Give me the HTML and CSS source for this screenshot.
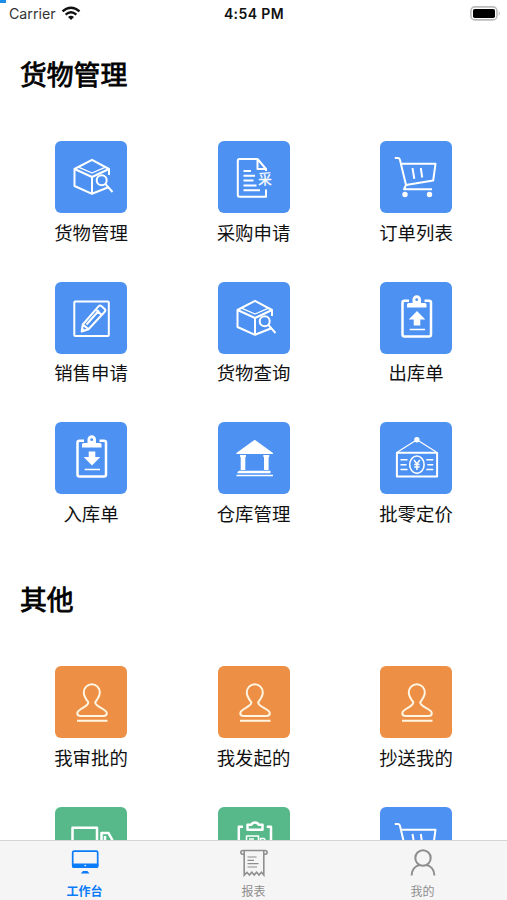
FILE: index.html
```
<!DOCTYPE html>
<html lang="zh-CN">
<head>
  <meta charset="UTF-8">
  <meta name="viewport" content="width=device-width, initial-scale=1.0">
  <title>工作台</title>
  <link rel="stylesheet" href="styles.css">
</head>
<body>
  <svg class="symbols">
    <symbol id="box" viewBox="0 0 72 72">
      <path d="M54 34V28L37 18.8L19.5 28V45L37 52.8L54 46M19.5 28L37 36L54 28M37 36V53"/>
      <path d="M24 26.3L37 32L50 26.3" stroke-width="1.3"/>
      <circle cx="46.7" cy="39.3" r="5" fill="#4d92f2"/>
      <path d="M50.5 43.2L57.5 51"/>
    </symbol>
    <symbol id="cart" viewBox="0 0 72 72">
      <path d="M14.8 17H18Q19.6 17.2 20 19L26 44M22 22.8H55.5L53.2 39.5L26 44L24 48.2H52M32.5 27L34.3 37.8M40.8 27L42.2 36.5"/>
      <circle class="solid" cx="25" cy="53.5" r="2.7"/>
      <circle class="solid" cx="49.5" cy="53.5" r="2.7"/>
    </symbol>
    <symbol id="clipboard" viewBox="0 0 72 72">
      <path stroke-width="2.5" d="M29 18.7H24.5Q22.5 18.7 22.5 20.7V52.5Q22.5 54.5 24.5 54.5H49Q51 54.5 51 52.5V20.7Q51 18.7 49 18.7H44.5"/>
      <path class="solid" d="M27 25.5V22.5Q27 21 28.5 21H32.5V17.5A4.2 4.2 0 0 1 41 17.5V21H45Q46.5 21 46.5 22.5V25.5Z"/>
      <circle cx="36.7" cy="17.7" r="1.4" fill="#4d92f2" stroke="none"/>
      <path stroke-width="1.5" d="M29.7 47.5H45"/>
    </symbol>
    <symbol id="stamp" viewBox="0 0 72 72">
      <path d="M33.3 36.2C31.2 33.4 28.8 30.5 28.8 26.5A8 8.3 0 0 1 44.8 26.5C44.8 30.5 42.2 33.4 40.2 36.2C39.6 41 51.8 42.4 51.8 47.2Q51.8 50 48.5 50H25.5Q22.3 50 22.3 47.2C22.3 42.4 34 41 33.3 36.2ZM22 54.8H52.5"/>
    </symbol>
  </svg>

  <div class="screen">
    <header class="status-bar">
      <div class="carrier">
        <span>Carrier</span>
        <svg width="20" height="15" viewBox="0 0 20 15">
          <path d="M1.5 5.4Q10-2 18.5 5.4M4.6 8.6Q10 3.9 15.4 8.6" fill="none" stroke="#111" stroke-width="2.3"/>
          <path d="M7 11Q10 8.5 13 11L10 14Z" fill="#111"/>
        </svg>
      </div>
      <div class="time">4:54 PM</div>
      <svg class="battery" width="31" height="15" viewBox="0 0 31 15">
        <rect x=".9" y=".9" width="26" height="13" rx="4" fill="#fff" stroke="#bbb" stroke-width="1.6"/>
        <rect x="3" y="3" width="22" height="9" rx="1.8"/>
        <path d="M28.7 5Q31 7.4 28.7 10Z" fill="#bbb"/>
      </svg>
      <i class="corner"></i>
    </header>

    <main>
      <section>
        <h2>货物管理</h2>
        <div class="grid">
          <div class="item">
            <svg class="tile"><use href="#box"/></svg>
            <span>货物管理</span>
          </div>
          <div class="item">
            <svg class="tile" viewBox="0 0 72 72">
              <path d="M48 30V28L39.5 18H21.5Q19.8 18 19.8 19.7V54Q19.8 55.7 21.5 55.7H48V48.5M39.5 18V28H48M25.5 30H33M25.5 34.7H37M25.5 39.5H35.5M25.5 44.4H38.5M25.5 49.3H42"/>
              <text x="40.3" y="43">采</text>
            </svg>
            <span>采购申请</span>
          </div>
          <div class="item">
            <svg class="tile"><use href="#cart"/></svg>
            <span>订单列表</span>
          </div>
          <div class="item">
            <svg class="tile" viewBox="0 0 72 72">
              <rect x="19.3" y="19.5" width="34.5" height="34.5" rx="1"/>
              <path d="M26.7 49.5L27.8 42.5L43.5 24.3Q44.8 22.8 46.3 24L49.7 27Q51 28.3 49.7 29.8L33.5 47.3ZM27.8 42.5L33.5 47.3M41 27.5L46.5 33M31.5 42.5L44 28.5"/>
              <path class="solid" d="M26.2 50L27 45.5L30.5 48.6Z"/>
            </svg>
            <span>销售申请</span>
          </div>
          <div class="item">
            <svg class="tile"><use href="#box"/></svg>
            <span>货物查询</span>
          </div>
          <div class="item">
            <svg class="tile" viewBox="0 0 72 72">
              <use href="#clipboard"/>
              <path class="solid" d="M37 29L45.3 37.5H40.3V43.5H33.7V37.5H28.7Z"/>
            </svg>
            <span>出库单</span>
          </div>
          <div class="item">
            <svg class="tile" viewBox="0 0 72 72">
              <use href="#clipboard"/>
              <path class="solid" d="M37 43.5L45.3 35H40.3V29.5H33.7V35H28.7Z"/>
            </svg>
            <span>入库单</span>
          </div>
          <div class="item">
            <svg class="tile" viewBox="0 0 72 72">
              <path class="solid" d="M36.7 17.8L55 31V32H18.4V31ZM22 33H28V34.5L27.3 35.5V48H22.7V35.5L22 34.5ZM45.3 33H51.3V34.5L50.6 35.5V48H46V35.5L45.3 34.5ZM21 48.8H52.5V51.3H19.5V50ZM18.5 52.7H55V54.3H18.5Z"/>
            </svg>
            <span>仓库管理</span>
          </div>
          <div class="item">
            <svg class="tile" viewBox="0 0 72 72">
              <circle class="solid" cx="36.9" cy="17.8" r="2.7"/>
              <path stroke-width="1.2" d="M17.5 30L36.9 17.8L56.3 30"/>
              <rect x="16.9" y="30.8" width="40.2" height="23.7"/>
              <ellipse cx="36.9" cy="42.7" rx="7.2" ry="8.7" stroke-width="1.6"/>
              <path stroke-width="1.5" d="M34 38L36.9 42L39.8 38M36.9 42V48M34.2 42.6H39.6M34.2 45H39.6M20.5 37.7H27.5M20.5 42.7H26.5M20.5 47.5H27.5M46.3 37.7H53.3M47.3 42.7H53.3M46.3 47.5H53.3"/>
            </svg>
            <span>批零定价</span>
          </div>
        </div>
      </section>

      <section>
        <h2>其他</h2>
        <div class="grid">
          <div class="item">
            <svg class="tile orange"><use href="#stamp"/></svg>
            <span>我审批的</span>
          </div>
          <div class="item">
            <svg class="tile orange"><use href="#stamp"/></svg>
            <span>我发起的</span>
          </div>
          <div class="item">
            <svg class="tile orange"><use href="#stamp"/></svg>
            <span>抄送我的</span>
          </div>
          <div class="item">
            <svg class="tile green" viewBox="0 0 72 72">
              <path stroke-width="2.5" d="M17.5 48V20.8H42V48ZM46.5 48V26H53.5L59 36V48ZM50 29V36H58"/>
            </svg>
          </div>
          <div class="item">
            <svg class="tile green" viewBox="0 0 72 72">
              <path stroke-width="2.5" d="M25 19.7H20.8V55H53V19.7H48.8M29.5 22.8V17.8H33.3A4 3.6 0 0 1 40.7 17.8H44.5V22.8Z"/>
              <path stroke-width="1.5" d="M28.5 42V29H40.5V42M42.5 42V31.5H46L48.5 35V42M31 32H36"/>
            </svg>
          </div>
          <div class="item">
            <svg class="tile"><use href="#cart"/></svg>
          </div>
        </div>
      </section>
    </main>

    <nav class="tab-bar">
      <div class="tab active">
        <svg width="28" height="28" viewBox="0 0 28 28">
          <rect x="1.7" y="2.2" width="25" height="16" rx="1.5" fill="none" stroke="currentColor" stroke-width="1.7"/>
          <path d="M1 14.5H27.4V17.3Q27.4 19 25.7 19H2.7Q1 19 1 17.3ZM12 22H16.4L18.5 24.6H9.8Z" fill="currentColor"/>
          <circle cx="14.2" cy="16.6" r=".8" fill="#fff"/>
        </svg>
        <span>工作台</span>
      </div>
      <div class="tab">
        <svg width="28" height="28" viewBox="0 0 28 28" fill="none" stroke="currentColor" stroke-width="1.6">
          <path d="M4 5.2H2.7A1.8 1.8 0 0 1 2.7 1.5H25.3A1.8 1.8 0 0 1 25.3 5.2H24M4.2 2V26L7 23.3L9.4 26L11.8 23.3L14.2 26L16.6 23.3L19 26L21.4 23.3L23.8 26V2"/>
          <path stroke-width="1.2" d="M7.5 8H16.5M7.5 11.3H14M7.5 14.7H18.5M7.5 18H17"/>
        </svg>
        <span>报表</span>
      </div>
      <div class="tab">
        <svg width="28" height="28" viewBox="0 0 28 28" fill="none" stroke="currentColor" stroke-width="2">
          <circle cx="14" cy="9" r="7.7"/>
          <path d="M2.6 26.5C2.6 20.5 6.5 17 10.3 16M25.4 26.5C25.4 20.5 21.5 17 17.7 16"/>
        </svg>
        <span>我的</span>
      </div>
    </nav>
  </div>
</body>
</html>
```
FILE: styles.css
```
* {
  box-sizing: border-box;
}
body {
  margin: 0;
  background: #fff;
  color: #111;
  font-family: "Liberation Sans", "Noto Sans CJK SC", sans-serif;
}
.symbols {
  display: none;
}
.screen {
  display: flex;
  flex-direction: column;
  height: 900px;
  overflow: hidden;
}
.status-bar {
  position: relative;
  flex: none;
  display: grid;
  grid-template-columns: 1fr auto 1fr;
  align-items: center;
  height: 27px;
  padding: 0 6px 0 9px;
  font-family: Inter, sans-serif;
}
.carrier {
  display: flex;
  align-items: center;
  gap: 5px;
  font-size: 14.2px;
  color: #333;
}
.time {
  font-size: 14px;
  font-weight: 600;
  letter-spacing: 0.4px;
  margin-right: 2px;
}
.battery {
  justify-self: end;
}
.corner {
  position: absolute;
  left: 0;
  top: 0;
  width: 6px;
  height: 3px;
  background: #1b8ee8;
}
main {
  flex: 1;
  min-height: 0;
  overflow: hidden;
}
section {
  height: 525px;
}
h2 {
  margin: 0;
  padding: 29px 20px 0;
  font-size: 26.8px;
  line-height: 40px;
  font-weight: 400;
  color: #000;
  -webkit-text-stroke: 0.8px #000;
}
.grid {
  display: grid;
  grid-template-columns: repeat(3, 162.5px);
  grid-auto-rows: 140.5px;
  justify-content: center;
  padding-top: 45.4px;
}
.item {
  display: flex;
  flex-direction: column;
  align-items: center;
  font-size: 18.4px;
  line-height: 28px;
}
.item span {
  margin-top: 6.4px;
}
.tile {
  flex: none;
  width: 72px;
  height: 72px;
  border-radius: 6px;
  background: #4d92f2;
  fill: none;
  stroke: #fff;
  stroke-width: 2;
  stroke-linejoin: round;
}
.tile text {
  font-size: 13.5px;
  fill: #fff;
  stroke: #fff;
  stroke-width: 0.3;
}
.solid {
  fill: #fff;
  stroke: none;
}
.orange {
  background: #ed9045;
  stroke: #fff5e2;
}
.green {
  background: #57b98a;
}
.tab-bar {
  flex: none;
  display: grid;
  grid-template-columns: repeat(3, 1fr);
  height: 60px;
  background: #f6f5f6;
  border-top: 1px solid #d5d5d5;
}
.tab {
  display: flex;
  flex-direction: column;
  align-items: center;
  padding-top: 8px;
  font-size: 12px;
  line-height: 18px;
  color: #8e8e8e;
}
.tab span {
  margin-top: 5.5px;
}
.active {
  color: #0a7cf8;
}
.active span {
  font-weight: bold;
}
```
